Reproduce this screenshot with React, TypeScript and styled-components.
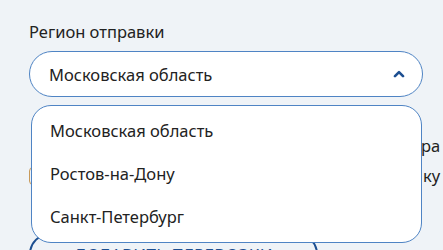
import React from "react";
import styled, { createGlobalStyle } from "styled-components";

const Global = createGlobalStyle`
  html, body { margin: 0; padding: 0; background: #eff3f7; overflow: hidden; }
  body { font-family: "Noto Sans", "Liberation Sans", sans-serif; color: #1e1e1e; }
`;

const Page = styled.div`
  width: 443px;
  height: 250px;
  overflow: hidden;
  padding: 20px 0 0 29px;
  box-sizing: border-box;
  position: relative;
`;

const Field = styled.div`
  position: relative;
  width: 394px;
  display: flex;
  flex-direction: column;
`;

const Label = styled.div`
  font-size: 16.5px;
  line-height: 24px;
  margin-bottom: 7px;
  color: #222;
`;

const Select = styled.div`
  height: 46px;
  box-sizing: border-box;
  border: 1.5px solid #4f84c4;
  border-radius: 23px;
  background: #fff;
  display: flex;
  align-items: center;
  justify-content: space-between;
  padding: 0 17px 0 19px;
  font-size: 16.5px;
  color: #222;
`;

const Menu = styled.ul`
  position: absolute;
  left: 2px;
  right: 1px;
  top: 85px;
  margin: 0;
  padding: 3px 0 4px;
  list-style: none;
  background: #fff;
  border: 1.5px solid #4f84c4;
  border-radius: 20px;
  z-index: 2;
`;

const Item = styled.li`
  height: 43px;
  display: flex;
  align-items: center;
  padding-left: 18px;
  font-size: 16.5px;
  color: #222;
`;

const Behind = styled.div`
  display: flex;
  flex-direction: column;
  gap: 6px;
  margin-top: 37px;
  white-space: nowrap;
`;

const CheckRow = styled.div`
  display: flex;
  align-items: center;
  gap: 12px;
  font-size: 16.5px;
  line-height: 24px;
  color: #222;
`;

const Box = styled.span`
  width: 18px;
  height: 18px;
  border: 1.5px solid #c89a5a;
  border-radius: 4px;
  flex: none;
  box-sizing: border-box;
`;

const Button = styled.button`
  margin-top: 45px;
  width: 289px;
  height: 42px;
  flex: none;
  border: 2px solid #1d4f91;
  border-radius: 21px;
  background: transparent;
  color: #1d4f91;
  font-family: "Noto Sans", "Liberation Sans", sans-serif;
  font-size: 17px;
  letter-spacing: 0.3px;
  text-transform: uppercase;
  padding: 0;
`;

const Chevron = () => (
  <svg width="12" height="8" viewBox="0 0 12 8">
    <path d="M2 6.2 L6 2.2 L10 6.2" fill="none" stroke="#1d4f91" strokeWidth="2.6" strokeLinecap="round" strokeLinejoin="round" />
  </svg>
);

export default function App() {
  return (
    <Page>
      <Global />
      <Field>
        <Label>Регион отправки</Label>
        <Select>
          <span>Московская область</span>
          <Chevron />
        </Select>
        <Menu>
          <Item>Московская область</Item>
          <Item>Ростов-на-Дону</Item>
          <Item>Санкт-Петербург</Item>
        </Menu>
        <Behind>
          <CheckRow style={{ marginLeft: 392 }}>ра</CheckRow>
          <CheckRow>
            <Box />
            <span style={{ marginLeft: 364 }}>ку</span>
          </CheckRow>
        </Behind>
        <Button>Добавить перевозки</Button>
      </Field>
    </Page>
  );
}
